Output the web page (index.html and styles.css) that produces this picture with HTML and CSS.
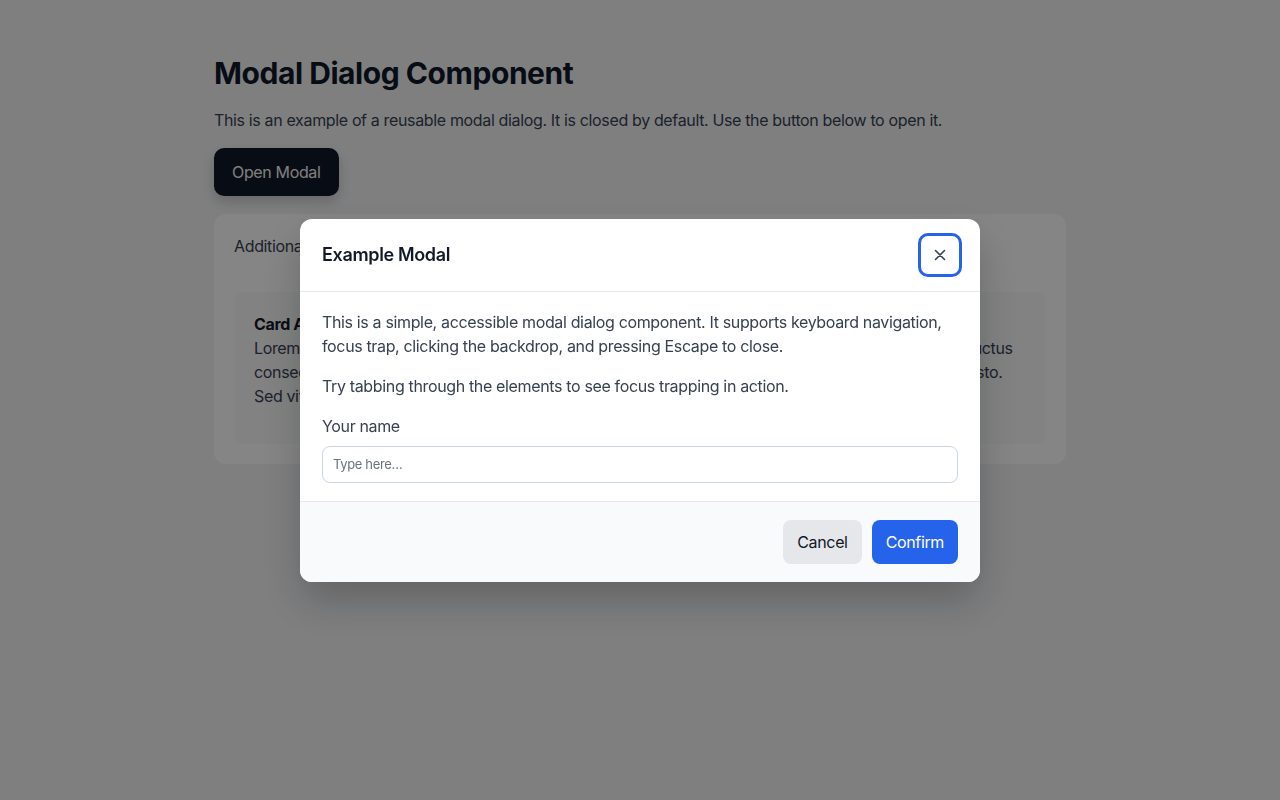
FILE: index.html
```html
<!DOCTYPE html>
<html lang="en">
<head>
    <meta charset="UTF-8">
    <meta name="viewport" content="width=device-width, initial-scale=1.0">
    <title>Modal Dialog Component</title>
    <link rel="stylesheet" href="styles.css">
</head>
<body>
    <main class="page">
        <h1>Modal Dialog Component</h1>
        <p class="intro">This is an example of a reusable modal dialog. It is closed by default. Use the button below to open it.</p>
        <button class="btn btn-dark" id="openModal">Open Modal</button>

        <section class="panel">
            <p class="panel-note">Additional content behind the modal to show the backdrop effect.</p>
            <div class="sub-card">
                <strong>Card A</strong>
                <p>Lorem ipsum dolor sit amet, consectetur adipiscing elit. Integer nec odio praesent, sed cursus ante luctus consequat. Sed nisi nulla quis sem at nibh elementum imperdiet. Duis sagittis ipsum, mauris velit a justo. Sed vitae lorem vel augue gravida dignissim eget in lectus.</p>
            </div>
        </section>
    </main>

    <!-- Modal -->
    <div class="backdrop" id="backdrop">
        <div class="modal" role="dialog" aria-modal="true" aria-labelledby="modalTitle">
            <header class="modal-header">
                <h2 id="modalTitle">Example Modal</h2>
                <button class="close-btn" aria-label="Close">
                    <svg width="14" height="14" viewBox="0 0 14 14" fill="none" stroke="currentColor" stroke-width="1.6" stroke-linecap="round">
                        <path d="M2.5 2.5l9 9M11.5 2.5l-9 9"/>
                    </svg>
                </button>
            </header>
            <div class="modal-body">
                <p>This is a simple, accessible modal dialog component. It supports keyboard navigation, focus trap, clicking the backdrop, and pressing Escape to close.</p>
                <p>Try tabbing through the elements to see focus trapping in action.</p>
                <label for="nameInput">Your name</label>
                <input type="text" id="nameInput" placeholder="Type here…">
            </div>
            <footer class="modal-footer">
                <button class="btn btn-light">Cancel</button>
                <button class="btn btn-primary">Confirm</button>
            </footer>
        </div>
    </div>
</body>
</html>
```

FILE: styles.css
```css
* {
    box-sizing: border-box;
}
body {
    margin: 0;
    font-family: Inter, "Noto Sans", sans-serif;
    background-color: #f3f4f6;
    color: #374151;
    font-size: 16px;
    line-height: 24px;
    letter-spacing: -0.022em;
}
.page {
    max-width: 900px;
    margin: 0 auto;
    padding: 55px 24px;
}
h1 {
    margin: 0 0 17px;
    font-size: 30px;
    line-height: 36px;
    font-weight: 700;
    letter-spacing: -0.015em;
    color: #0f172a;
}
.intro {
    margin: 0 0 16px;
}
.btn {
    font-family: inherit;
    font-size: 16px;
    line-height: 24px;
    letter-spacing: inherit;
    border: none;
    cursor: pointer;
}
.btn-dark {
    padding: 12px 18px;
    border-radius: 10px;
    background-color: #111827;
    color: #f3f4f6;
    box-shadow: 0 6px 14px rgba(0, 0, 0, 0.18);
}
.panel {
    margin-top: 18px;
    padding: 20px;
    border-radius: 12px;
    background-color: #ffffff;
}
.panel-note {
    margin: 0 0 34px;
}
.sub-card {
    padding: 20px 20px 36px;
    border-radius: 10px;
    background-color: #f9fafb;
}
.sub-card strong {
    color: #111827;
}
.sub-card p {
    margin: 0;
}

/* backdrop + dialog */
.backdrop {
    position: fixed;
    inset: 0;
    display: flex;
    align-items: center;
    justify-content: center;
    background-color: rgba(0, 0, 0, 0.48);
}
.modal {
    width: 680px;
    border-radius: 12px;
    background-color: #ffffff;
    overflow: hidden;
    box-shadow: 0 20px 40px rgba(0, 0, 0, 0.22);
}
.modal-header {
    display: flex;
    align-items: center;
    justify-content: space-between;
    padding: 14px 18px 14px 22px;
    border-bottom: 1px solid #e5e7eb;
}
.modal-header h2 {
    margin: 0;
    font-size: 18px;
    font-weight: 600;
    color: #111827;
}
.close-btn {
    width: 44px;
    height: 44px;
    display: flex;
    align-items: center;
    justify-content: center;
    border: 3px solid #2563eb;
    border-radius: 10px;
    background: #ffffff;
    color: #374151;
    cursor: pointer;
}
.modal-body {
    padding: 18px 22px;
}
.modal-body p {
    margin: 0 0 16px;
}
.modal-body label {
    display: block;
    margin-bottom: 8px;
}
.modal-body input {
    width: 100%;
    height: 37px;
    padding: 0 10px;
    border: 1px solid #cbd5e1;
    border-radius: 8px;
    font-family: inherit;
    font-size: 13px;
    letter-spacing: inherit;
    color: #111827;
}
.modal-body input::placeholder {
    color: #6b7280;
}
.modal-footer {
    display: flex;
    justify-content: flex-end;
    gap: 10px;
    padding: 18px 22px;
    border-top: 1px solid #e5e7eb;
    background-color: #f8fafc;
}
.btn-light,
.btn-primary {
    height: 44px;
    padding: 0 14px;
    border-radius: 8px;
}
.btn-light {
    background-color: #e5e7eb;
    color: #111827;
}
.btn-primary {
    background-color: #2563eb;
    color: #ffffff;
}
```
